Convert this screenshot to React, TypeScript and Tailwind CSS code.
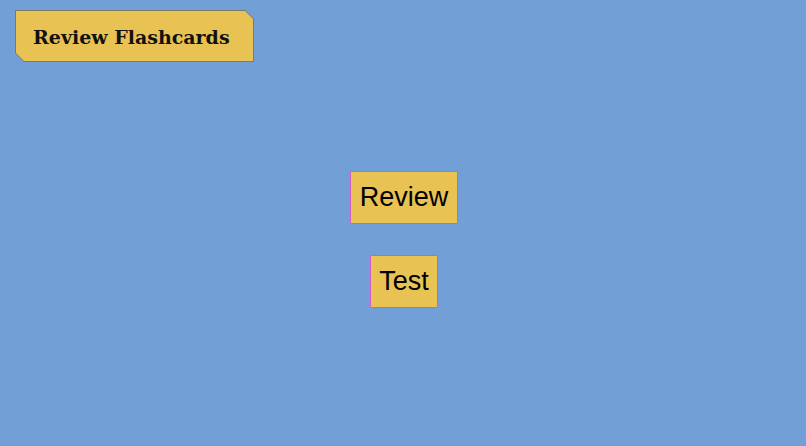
import React from "react";

const App: React.FC = () => {
  return (
    <div className="w-[806px] h-[446px] bg-[#729fd5] relative overflow-hidden">
      <div className="pt-[10px] pl-[15px]">
        <div className="w-[239px] h-[52px] bg-[#7a7a6a] p-px [clip-path:polygon(0_0,230px_0,100%_9px,100%_100%,9px_100%,0_calc(100%-9px))]">
          <div className="w-full h-full bg-[#e8c252] flex items-center pl-[17px] pt-[2px] [clip-path:polygon(0_0,229px_0,100%_8px,100%_100%,8px_100%,0_calc(100%-8px))]">
            <span className="text-[19px] font-bold text-[#111] font-['DejaVu_Serif',serif]">
              Review Flashcards
            </span>
          </div>
        </div>
      </div>
      <div className="flex flex-col items-center gap-[31px] mt-[109px] pl-[2px]">
        <button className="bg-[#e8c252] border border-[#d65ccc] px-[9px] py-[10px] text-[27px] leading-[31px] text-black font-['Liberation_Sans',Arial,sans-serif]">
          Review
        </button>
        <button className="bg-[#e8c252] border border-[#d65ccc] px-[8px] py-[10px] text-[27px] leading-[31px] text-black font-['Liberation_Sans',Arial,sans-serif]">
          Test
        </button>
      </div>
    </div>
  );
};

export default App;
